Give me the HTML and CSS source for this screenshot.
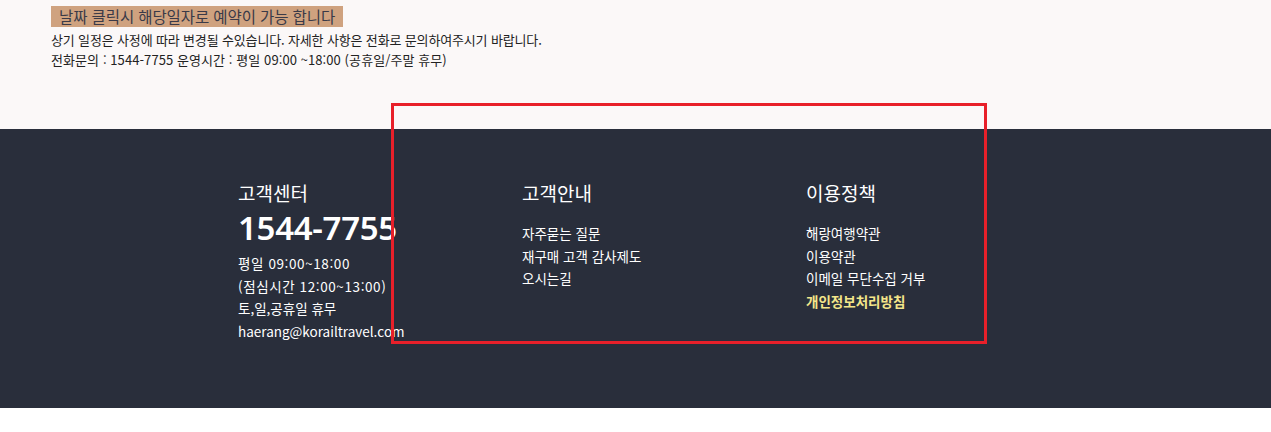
FILE: index.html
```html
<!DOCTYPE html>
<html lang="ko">
<head>
<meta charset="utf-8">
<link rel="stylesheet" href="styles.css">
<title>Footer</title>
</head>
<body>
<section class="notice">
  <div class="banner">날짜 클릭시 해당일자로 예약이 가능 합니다</div>
  <p class="note">상기 일정은 사정에 따라 변경될 수있습니다. 자세한 사항은 전화로 문의하여주시기 바랍니다.</p>
  <p class="note note-tel">전화문의 : 1544-7755 운영시간 : 평일 09:00 ~18:00 (공휴일/주말 휴무)</p>
</section>
<footer class="footer">
  <div class="cols">
    <div class="col">
      <h3 class="col-title">고객센터</h3>
      <div class="phone">1544-7755</div>
      <ul class="info">
        <li class="time">평일 09:00~18:00</li>
        <li class="time">(점심시간 12:00~13:00)</li>
        <li>토,일,공휴일 휴무</li>
        <li>haerang@korailtravel.com</li>
      </ul>
    </div>
    <div class="col">
      <h3 class="col-title">고객안내</h3>
      <ul class="links">
        <li>자주묻는 질문</li>
        <li>재구매 고객 감사제도</li>
        <li>오시는길</li>
      </ul>
    </div>
    <div class="col">
      <h3 class="col-title">이용정책</h3>
      <ul class="links">
        <li>해랑여행약관</li>
        <li>이용약관</li>
        <li>이메일 무단수집 거부</li>
        <li class="hl">개인정보처리방침</li>
      </ul>
    </div>
  </div>
</footer>
<div class="bottom"></div>
<div class="mark"></div>
</body>
</html>
```
FILE: styles.css
```css
* { box-sizing: border-box; }
html, body { margin: 0; padding: 0; }
body {
  font-family: "Noto Sans CJK KR", "Noto Sans", sans-serif;
  background: #ffffff;
  color: #222;
}
.notice {
  background: #fbf8f8;
  height: 129px;
  padding: 6px 0 0 51px;
}
.banner {
  width: fit-content;
  background: #cfa27f;
  color: #3a3a48;
  font-size: 15.5px;
  line-height: 21px;
  height: 21px;
  padding: 0 8px;
  letter-spacing: -0.1px;
}
.note {
  margin: 0;
  font-size: 13px;
  line-height: 20px;
  color: #222;
  letter-spacing: -0.15px;
}
.note-tel { letter-spacing: 0.08px; }
.banner + .note { margin-top: 3px; }
.footer {
  background: #292e3b;
  height: 279px;
  padding: 49px 0 0 238px;
  color: #fff;
}
.cols { display: flex; }
.col { width: 284px; }
.col-title {
  margin: 0;
  font-size: 19px;
  font-weight: 400;
  line-height: 30px;
}
.phone {
  font-family: "Noto Sans", sans-serif;
  font-weight: 600;
  font-size: 33px;
  line-height: 40px;
  letter-spacing: -0.3px;
}
.info, .links {
  list-style: none;
  margin: 0;
  padding: 0;
  font-size: 13.5px;
}
.info { margin-top: 4px; }
.info li { line-height: 22.5px; }
.info .time { letter-spacing: 0.6px; }
.links { margin-top: 14px; }
.links li { line-height: 22.5px; }
.links .hl { color: #f4e68a; font-weight: 700; }
.bottom { height: 24px; background: #fff; }
.mark {
  position: absolute;
  left: 391px;
  top: 103px;
  width: 596px;
  height: 241px;
  border: 3px solid #e8202a;
  pointer-events: none;
}
```
